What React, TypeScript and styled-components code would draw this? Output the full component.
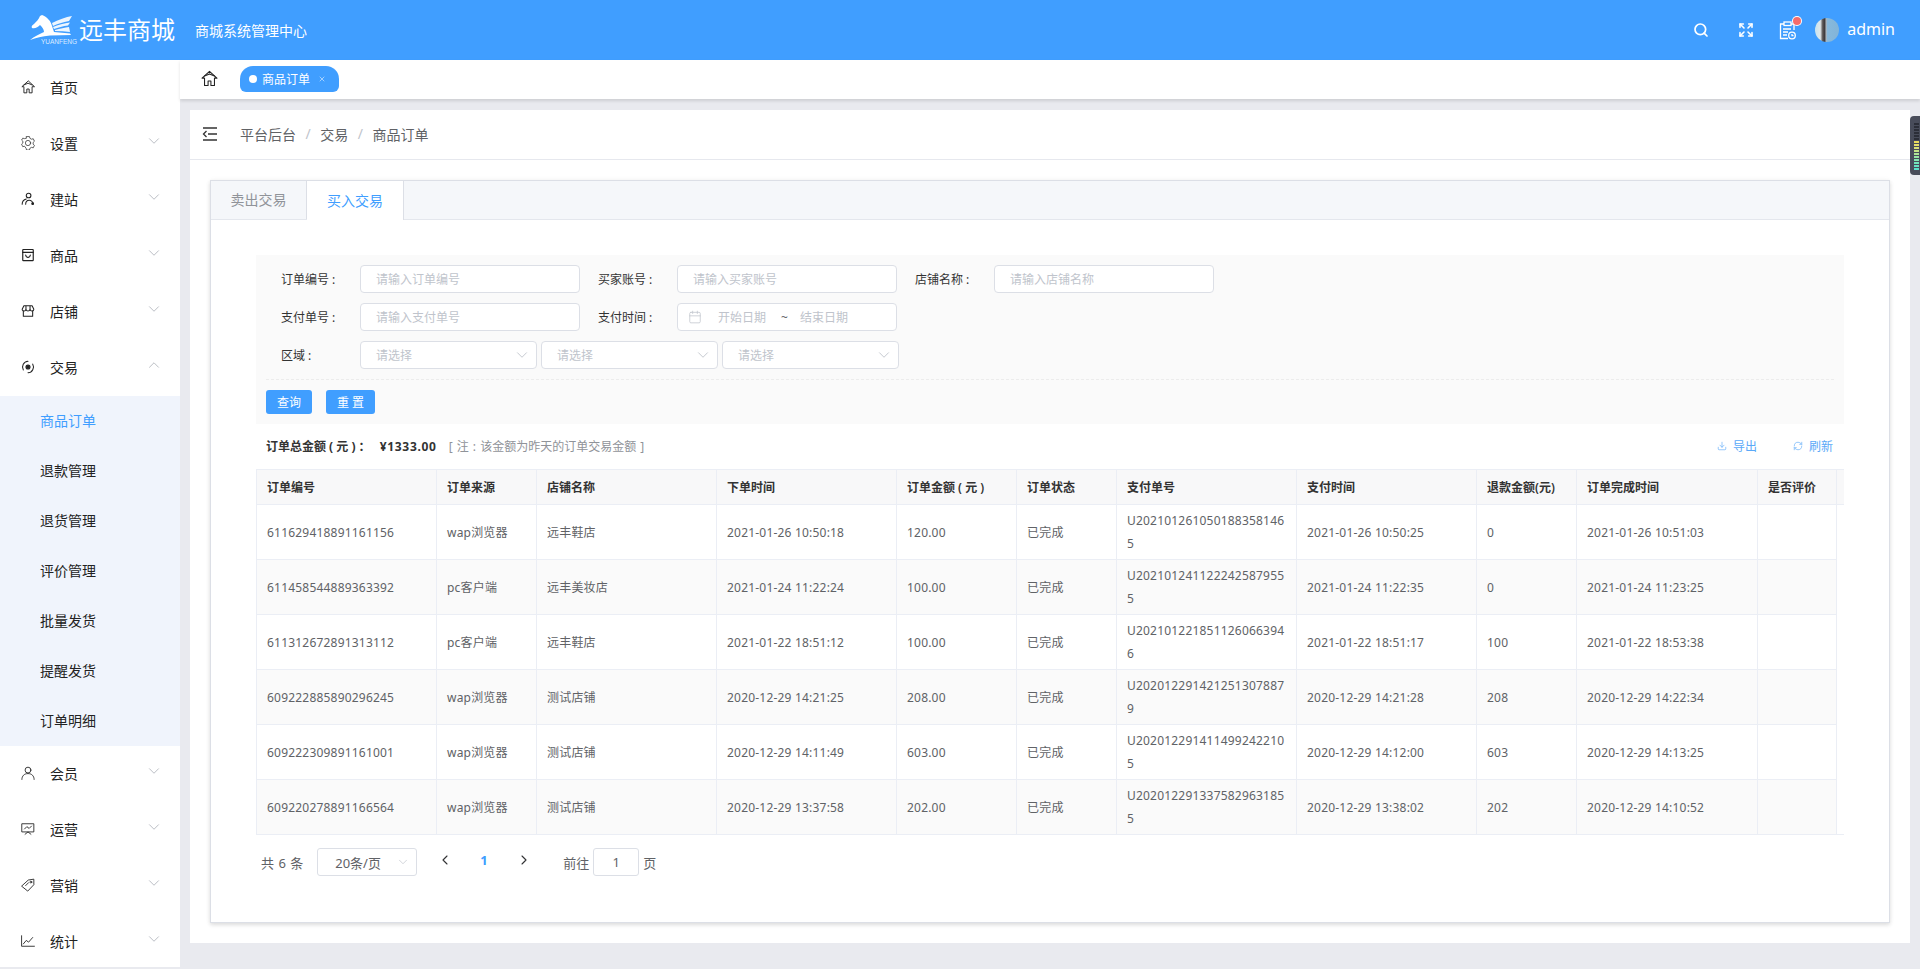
import React from 'react';
import styled, { createGlobalStyle } from 'styled-components';
import {
  ChevronDown,
  ChevronUp,
  ChevronLeft,
  ChevronRight,
  Search,
  Expand,
  Calendar,
  Download,
  RefreshCw,
  X,
} from 'lucide-react';

const GlobalStyle = createGlobalStyle`
  * {
    box-sizing: border-box;
  }

  html,
  body {
    margin: 0;
    height: 100%;
    overflow: hidden;
    background: #e9eaef;
    font-family: 'Noto Sans', 'Noto Sans CJK SC', sans-serif;
    font-size: 12px;
    color: #606266;
  }
`;

const Page = styled.div`
  position: relative;
  height: 969px;
  overflow: hidden;
  display: flex;
  flex-direction: column;
`;

const Header = styled.header`
  height: 60px;
  flex: none;
  background: #409eff;
  color: #fff;
  display: flex;
  align-items: center;
  padding-left: 30px;
  padding-right: 25px;
`;

const Logo = styled.div`
  position: relative;
  width: 48px;
  height: 30px;
  flex: none;
`;

const LogoMark = styled.span`
  position: absolute;
  left: 11px;
  bottom: 0;
  font-size: 6.5px;
  line-height: 7px;
  font-family: 'Liberation Sans', sans-serif;
  color: #dcecff;
  white-space: nowrap;
`;

const Brand = styled.div`
  margin-left: 1px;
  font-size: 24px;
  line-height: 30px;
  width: 116px;
`;

const SubBrand = styled.div`
  font-size: 14px;
  line-height: 20px;
  margin-top: 2px;
`;

const HeaderTools = styled.div`
  margin-left: auto;
  display: flex;
  align-items: center;
`;

const ToolButton = styled.span<{ $gap: number }>`
  display: flex;
  margin-right: ${(p) => p.$gap}px;
`;

const Notify = styled.span`
  position: relative;
  display: flex;
  margin-right: 19px;

  &::after {
    content: '';
    position: absolute;
    top: -4px;
    right: -5px;
    width: 8px;
    height: 8px;
    border-radius: 50%;
    background: #f56c6c;
    box-shadow: 0 0 0 1px #fff;
  }
`;

const Avatar = styled.span`
  width: 24px;
  height: 24px;
  border-radius: 50%;
  margin-right: 8px;
  background: linear-gradient(
    90deg,
    #c5e2f0 0,
    #e0e8ea 22%,
    #5a5655 32%,
    #3f3c3e 40%,
    #a9b5bd 47%,
    #87b9dc 52%,
    #82b4d8 100%
  );
`;

const UserName = styled.span`
  font-size: 16px;
  line-height: 20px;
  margin-top: -2px;
`;

const Body = styled.div`
  flex: 1;
  display: flex;
  min-height: 0;
`;

const Sidebar = styled.aside`
  width: 180px;
  height: 907px;
  flex: none;
  background: #fff;
  overflow: hidden;
`;

const MenuItem = styled.div`
  height: 56px;
  display: flex;
  align-items: center;
  padding-left: 21px;
  padding-bottom: 2px;
  font-size: 14px;
  color: #222;

  > svg:first-child {
    flex: none;
    margin-right: 15px;
    margin-top: -1px;
  }
`;

const MenuArrow = styled.span`
  display: flex;
  margin-left: auto;
  margin-right: 17px;
  margin-top: -5px;
  color: #a4a8b0;
`;

const SubMenu = styled.div`
  background: #f0f4fc;
`;

const SubItem = styled.div<{ $active?: boolean }>`
  height: 50px;
  display: flex;
  align-items: center;
  padding-left: 40px;
  padding-bottom: 2px;
  font-size: 14px;
  color: ${(p) => (p.$active ? '#409eff' : '#222')};
`;

const Main = styled.main`
  flex: 1;
  min-width: 0;
`;

const TagBar = styled.div`
  height: 39px;
  background: #fff;
  display: flex;
  padding-left: 21px;
  padding-top: 6px;
  box-shadow: 0 2px 3px rgba(0, 0, 0, 0.12);
  color: #222;

  > svg {
    margin-top: 4px;
  }
`;

const Tag = styled.div`
  margin-left: 22px;
  width: 99px;
  height: 26px;
  border-radius: 13px 13px 6px 6px;
  background: #409eff;
  color: #fff;
  display: flex;
  align-items: center;
  padding-left: 9px;
  font-size: 12px;
`;

const TagDot = styled.span`
  width: 8px;
  height: 8px;
  border-radius: 50%;
  background: #fff;
  margin-right: 5px;
`;

const TagClose = styled.span`
  display: flex;
  margin-left: 8px;
  color: #d5e8ff;
`;

const Content = styled.section`
  margin: 11px 10px 0;
  background: #fff;
  padding-bottom: 20px;
`;

const Crumbs = styled.div`
  height: 50px;
  border-bottom: 1px solid #e6e8ee;
  display: flex;
  align-items: center;
  padding-left: 12px;
  padding-bottom: 2px;
  font-size: 14px;
  color: #606266;

  > svg {
    margin-right: 22px;
  }
`;

const CrumbSep = styled.span`
  color: #c0c4cc;
  margin: 0 9.5px;
`;

const Card = styled.div`
  margin: 20px 20px 0;
  border: 1px solid #dcdfe6;
  background: #fff;
  box-shadow: 0 2px 4px rgba(0, 0, 0, 0.12), 0 0 6px rgba(0, 0, 0, 0.04);
  padding-bottom: 46px;
`;

const TabHeader = styled.div`
  height: 39px;
  display: flex;
  background: #f5f7fa;
  border-bottom: 1px solid #e4e7ed;
`;

const TabItem = styled.div<{ $active?: boolean }>`
  width: ${(p) => (p.$active ? 97 : 96)}px;
  height: ${(p) => (p.$active ? 39 : 38)}px;
  display: flex;
  align-items: center;
  justify-content: center;
  padding-bottom: 2px;
  font-size: 14px;
  background: ${(p) => (p.$active ? '#fff' : 'transparent')};
  color: ${(p) => (p.$active ? '#409eff' : '#909399')};
  border-right: 1px solid #dcdfe6;
`;

const CardBody = styled.div`
  padding: 35px 45px 0;
`;

const FilterPanel = styled.div`
  background: #fafafa;
  padding: 10px;
  height: 169px;
`;

const FilterRow = styled.div`
  display: flex;
  align-items: center;
  height: 28px;
  margin-bottom: 10px;
  margin-left: -3.5px;
`;

const FieldLabel = styled.label`
  width: 97.5px;
  padding-left: 18.5px;
  flex: none;
  color: #333;
  font-size: 12px;
`;

const TextInput = styled.input`
  width: 219.5px;
  height: 28px;
  flex: none;
  border: 1px solid #dcdfe6;
  border-radius: 4px;
  background: #fff;
  padding: 0 15px;
  font: inherit;
  font-size: 12px;
  outline: none;

  &::placeholder {
    color: #c0c4cc;
  }
`;

const DateBox = styled.div`
  width: 219.5px;
  height: 28px;
  flex: none;
  border: 1px solid #dcdfe6;
  border-radius: 4px;
  background: #fff;
  display: flex;
  align-items: center;
  padding-left: 10px;
  color: #c0c4cc;
`;

const DateText = styled.span<{ $left: number }>`
  margin-left: ${(p) => p.$left}px;
`;

const DateTo = styled.span`
  margin-left: 15px;
  color: #606266;
  margin-right: -3px;
`;

const SelectBox = styled.div`
  width: 177px;
  height: 28px;
  flex: none;
  margin-right: 4px;
  border: 1px solid #dcdfe6;
  border-radius: 4px;
  background: #fff;
  display: flex;
  align-items: center;
  justify-content: space-between;
  padding: 0 5px 0 15px;
  color: #c0c4cc;
`;

const FilterActions = styled.div`
  border-top: 1px dashed #ececec;
  padding-top: 10px;
  display: flex;
  gap: 14px;
`;

const Button = styled.button`
  height: 24px;
  border: 0;
  border-radius: 3px;
  background: #409eff;
  color: #fff;
  font: inherit;
  font-size: 12px;
  padding: 0;
  width: 49px;

  &:first-child {
    width: 46px;
  }
`;

const Summary = styled.div`
  height: 45px;
  display: flex;
  align-items: center;
  padding: 0 11px 2px 10px;
`;

const SummaryTotal = styled.strong`
  color: #333;
  font-weight: 700;
  white-space: pre;
`;

const SummaryAmount = styled.span`
  margin-left: 9px;
  letter-spacing: 0.7px;
`;

const SummaryNote = styled.span`
  margin-left: 12px;
  color: #909399;
  word-spacing: 1px;
`;

const SummaryLink = styled.span<{ $first?: boolean }>`
  display: flex;
  align-items: center;
  gap: 6px;
  color: #5aa9f8;
  margin-left: ${(p) => (p.$first ? 'auto' : '36px')};
`;

const TableWrap = styled.div`
  width: 1588px;
  border-bottom: 1px solid #ebeef5;
`;

const OrderTable = styled.table`
  width: 100%;
  table-layout: fixed;
  border-collapse: separate;
  border-spacing: 0;
  font-size: 12px;

  tbody tr:last-child td {
    height: 54px;
    border-bottom: 0;
  }
`;

const HeadCell = styled.th`
  height: 36px;
  padding: 0 10px;
  text-align: left;
  font-weight: 600;
  color: #333;
  background: #f8f8f9;
  border-top: 1px solid #ebeef5;
  border-bottom: 1px solid #ebeef5;
  border-right: 1px solid #ebeef5;

  &:first-child {
    border-left: 1px solid #ebeef5;
  }
`;

const GutterCell = styled.th`
  background: #f8f8f9;
  border-top: 1px solid #ebeef5;
  border-bottom: 1px solid #ebeef5;
  padding: 0;
`;

const BodyCell = styled.td<{ $stripe: boolean }>`
  height: 55px;
  padding: 0 10px;
  line-height: 23px;
  word-break: break-all;
  letter-spacing: 0.2px;
  color: #606266;
  background: ${(p) => (p.$stripe ? '#fafafa' : '#fff')};
  border-bottom: 1px solid #ebeef5;
  border-right: 1px solid #ebeef5;

  &:first-child {
    border-left: 1px solid #ebeef5;
  }
`;

const Pagination = styled.div`
  display: flex;
  align-items: center;
  height: 28px;
  margin-top: 13px;
  padding-left: 5px;
  font-size: 13px;
  color: #606266;
`;

const PageTotal = styled.span`
  word-spacing: 1px;
`;

const PageSize = styled.div`
  width: 100px;
  height: 28px;
  margin-left: 14px;
  border: 1px solid #dcdfe6;
  border-radius: 3px;
  display: flex;
  align-items: center;
  justify-content: space-between;
  padding: 0 6px 0 17px;
`;

const PageArrow = styled.span<{ $left: number }>`
  display: flex;
  margin-left: ${(p) => p.$left}px;
  margin-top: -4px;
  color: #303133;
`;

const PageCurrent = styled.span`
  margin-left: 27px;
  margin-top: -4px;
  width: 8px;
  color: #409eff;
  font-weight: 700;
`;

const GotoText = styled.span<{ $left: number }>`
  margin-left: ${(p) => p.$left}px;
`;

const GotoInput = styled.div`
  width: 46px;
  height: 28px;
  margin: 0 4px;
  border: 1px solid #dcdfe6;
  border-radius: 3px;
  display: flex;
  align-items: center;
  justify-content: center;
`;

const MeterTab = styled.div`
  position: absolute;
  right: 0;
  top: 116px;
  width: 10px;
  height: 59px;
  border-radius: 4px 0 0 4px;
  background: #484c5a;
`;

const Line = ({ children, size = 14, sw = 1.5 }: { children: React.ReactNode; size?: number; sw?: number }) => (
  <svg width={size} height={size} viewBox='0 0 24 24' fill='none' stroke='currentColor' strokeWidth={sw} strokeLinecap='round' strokeLinejoin='round'>
    {children}
  </svg>
);

const HomeIcon = ({ size = 14, sw = 1.6 }: { size?: number; sw?: number }) => (
  <Line size={size} sw={sw}>
    <path d='M12 2 1.5 11.5H5V22h5v-6.5h4V22h5V11.5h3.500Z' />
    <path d='M5 8.500 12 5.500l7 3' />
  </Line>
);

const GearIcon = () => (
  <Line sw={1.2}>
    <path d='M9.500 2h5l.8 3 2.700 1.500 3-.8 2 4.300-2.200 2 0 3 2.200 2-2 4.300-3-.8-2.700 1.500-.8 3h-5l-.8-3L6 18.500l-3 .8-2-4.300 2.200-2v-3L1 8l2-3.300 3 .8L8.700 5Z' transform='translate(0 -1)' />
    <circle cx='12' cy='12' r='4.500' />
  </Line>
);

const SiteIcon = () => (
  <Line sw={1.8}>
    <circle cx='13' cy='6' r='4' />
    <path d='M2 21c0-5 3-8 7-9' />
    <path d='M8 21c0-4 2-7 6-7s6 3 7 6' />
    <circle cx='20' cy='20' r='1.500' fill='currentColor' />
  </Line>
);

const GoodsIcon = () => (
  <Line sw={2}>
    <rect x='3' y='2.500' width='18' height='19' rx='1' />
    <path d='M3 7.500h18' />
    <path d='M8 12c.5 3 2 4 4 4s3.500-1 4-4' />
  </Line>
);

const StoreIcon = () => (
  <Line sw={1.8}>
    <path d='M5 3h14l3 6c0 2-2 3-3.500 3S16 11 15.500 10c-.5 1-2 2-3.500 2s-3-1-3.500-2C8 11 7 12 5.500 12S2 11 2 9Z' />
    <path d='M4 12v9h16v-9' />
    <path d='M8.500 4v6M15.500 4v6' />
  </Line>
);

const TradeIcon = () => (
  <Line sw={1.8}>
    <path d='M4 17a10 10 0 0 1 8-15M20 7a10 10 0 0 1-8 15' />
    <circle cx='12' cy='12' r='3.500' fill='currentColor' />
  </Line>
);

const UserIcon = () => (
  <Line>
    <circle cx='12' cy='7' r='5' />
    <path d='M1.500 23c0-6 4-10 10.500-10s10.500 4 10.500 10' />
  </Line>
);

const BoardIcon = () => (
  <Line>
    <rect x='2' y='3' width='20' height='14' />
    <path d='m6 12 4-4 4 3 4-4' />
    <path d='M7 21 12 17l5 4' />
  </Line>
);

const TagIcon = () => (
  <Line>
    <path d='m1.500 13.500 11-10 9.500-1.500v9.500l-10 10.500Z' />
    <circle cx='17' cy='7' r='1.500' />
    <path d='m8 13 5-5' />
  </Line>
);

const ChartIcon = () => (
  <Line>
    <path d='M1 3v18h22' />
    <path d='m4 17 5-6 4 3 7-8' />
  </Line>
);

const CollapseIcon = () => (
  <svg width='16' height='14' viewBox='0 0 16 14' fill='none' stroke='#333' strokeWidth='1.3'>
    <path d='M1 1h14M6 7h9M1 13h14' />
    <path d='M4.500 4 1.500 7l3 3' />
  </svg>
);

const ClipboardIcon = () => (
  <svg width='17' height='19' viewBox='0 0 17 19' fill='none' stroke='#fff' strokeWidth='1.300'>
    <path d='M5 3H1.500v14.500H9M12 3h3v6' />
    <rect x='5' y='1' width='7' height='3.500' />
    <path d='M4 8h8M4 11h5M4 14h4' />
    <circle cx='13' cy='14.500' r='3.300' />
    <path d='M13 13v1.700h1.500' />
  </svg>
);

const LogoIcon = () => (
  <svg width='42' height='26' viewBox='0 0 42 26' fill='#fff'>
    <path d='M12 0C17 2 21 6 22 11L24 17 40 18.500 41 20 20 20.500C12 21 6 23 0 25 5 21 10 19 14 17 14 14 12 12 10 10 8 12 5 14 2 13 1 12 2 10 4 9 6 7 9 4 10 1Z' />
    <path opacity='0.9' d='M22 8C28 5 36 2 42 1L39 6C33 7 27 9 23 11Z' />
    <path opacity='0.9' d='M23 12C28 10 34 8 40 7.500L38 10.500C33 11 28 12.500 24 14Z' />
    <path opacity='0.9' d='M25 15C30 13.500 35 12.500 39 12L40 17C35 16.500 30 16 25 16Z' />
  </svg>
);

const Meter = () => {
  const colors = ['#2b2e38', '#2b2e38', '#2b2e38', '#2b2e38', '#2b2e38', '#2b2e38', '#e8dc5c', '#e4e06a', '#d8e276', '#c4e486', '#aee596', '#98e6a4', '#84e6b0', '#72e4ba', '#66e2c2', '#5cdfc8'];
  return (
    <svg width='10' height='59' viewBox='0 0 10 59'>
      {colors.map((c, i) => (
        <rect key={i} x='4' y={7 + i * 3} width='5' height='2' fill={c} />
      ))}
    </svg>
  );
};

const menuBefore = [
  { name: '首页', icon: <HomeIcon />, arrow: false },
  { name: '设置', icon: <GearIcon />, arrow: true },
  { name: '建站', icon: <SiteIcon />, arrow: true },
  { name: '商品', icon: <GoodsIcon />, arrow: true },
  { name: '店铺', icon: <StoreIcon />, arrow: true },
];

const menuAfter = [
  { name: '会员', icon: <UserIcon /> },
  { name: '运营', icon: <BoardIcon /> },
  { name: '营销', icon: <TagIcon /> },
  { name: '统计', icon: <ChartIcon /> },
];

const subMenu = ['商品订单', '退款管理', '退货管理', '评价管理', '批量发货', '提醒发货', '订单明细'];

const columns = [
  { title: '订单编号', width: 181 },
  { title: '订单来源', width: 100 },
  { title: '店铺名称', width: 180 },
  { title: '下单时间', width: 180 },
  { title: '订单金额 ( 元 )', width: 120 },
  { title: '订单状态', width: 100 },
  { title: '支付单号', width: 180 },
  { title: '支付时间', width: 180 },
  { title: '退款金额(元)', width: 100 },
  { title: '订单完成时间', width: 181 },
  { title: '是否评价', width: 79 },
];

const orders = [
  ['611629418891161156', 'wap浏览器', '远丰鞋店', '2021-01-26 10:50:18', '120.00', '已完成', 'U2021012610501883581465', '2021-01-26 10:50:25', '0', '2021-01-26 10:51:03', ''],
  ['611458544889363392', 'pc客户端', '远丰美妆店', '2021-01-24 11:22:24', '100.00', '已完成', 'U2021012411222425879555', '2021-01-24 11:22:35', '0', '2021-01-24 11:23:25', ''],
  ['611312672891313112', 'pc客户端', '远丰鞋店', '2021-01-22 18:51:12', '100.00', '已完成', 'U2021012218511260663946', '2021-01-22 18:51:17', '100', '2021-01-22 18:53:38', ''],
  ['609222885890296245', 'wap浏览器', '测试店铺', '2020-12-29 14:21:25', '208.00', '已完成', 'U2020122914212513078879', '2020-12-29 14:21:28', '208', '2020-12-29 14:22:34', ''],
  ['609222309891161001', 'wap浏览器', '测试店铺', '2020-12-29 14:11:49', '603.00', '已完成', 'U2020122914114992422105', '2020-12-29 14:12:00', '603', '2020-12-29 14:13:25', ''],
  ['609220278891166564', 'wap浏览器', '测试店铺', '2020-12-29 13:37:58', '202.00', '已完成', 'U2020122913375829631855', '2020-12-29 13:38:02', '202', '2020-12-29 14:10:52', ''],
];

export default function App() {
  return (
    <Page>
      <GlobalStyle />
      <Header>
        <Logo>
          <LogoIcon />
          <LogoMark>YUANFENG</LogoMark>
        </Logo>
        <Brand>远丰商城</Brand>
        <SubBrand>商城系统管理中心</SubBrand>
        <HeaderTools>
          <ToolButton $gap={29}>
            <Search size={16} strokeWidth={2.6} />
          </ToolButton>
          <ToolButton $gap={25}>
            <Expand size={16} strokeWidth={2.4} />
          </ToolButton>
          <Notify>
            <ClipboardIcon />
          </Notify>
          <Avatar />
          <UserName>admin</UserName>
        </HeaderTools>
      </Header>
      <Body>
        <Sidebar>
          {menuBefore.map((m) => (
            <MenuItem key={m.name}>
              {m.icon}
              {m.name}
              {m.arrow && (
                <MenuArrow>
                  <ChevronDown size={18} strokeWidth={1} />
                </MenuArrow>
              )}
            </MenuItem>
          ))}
          <MenuItem>
            <TradeIcon />
            交易
            <MenuArrow>
              <ChevronUp size={18} strokeWidth={1} />
            </MenuArrow>
          </MenuItem>
          <SubMenu>
            {subMenu.map((name, i) => (
              <SubItem key={name} $active={i === 0}>
                {name}
              </SubItem>
            ))}
          </SubMenu>
          {menuAfter.map((m) => (
            <MenuItem key={m.name}>
              {m.icon}
              {m.name}
              <MenuArrow>
                <ChevronDown size={18} strokeWidth={1} />
              </MenuArrow>
            </MenuItem>
          ))}
        </Sidebar>
        <Main>
          <TagBar>
            <HomeIcon size={17} sw={1.5} />
            <Tag>
              <TagDot />
              商品订单
              <TagClose>
                <X size={8} strokeWidth={2} />
              </TagClose>
            </Tag>
          </TagBar>
          <Content>
            <Crumbs>
              <CollapseIcon />
              平台后台
              <CrumbSep>/</CrumbSep>
              交易
              <CrumbSep>/</CrumbSep>
              商品订单
            </Crumbs>
            <Card>
              <TabHeader>
                <TabItem>卖出交易</TabItem>
                <TabItem $active>买入交易</TabItem>
              </TabHeader>
              <CardBody>
                <FilterPanel>
                  <FilterRow>
                    <FieldLabel>订单编号 :</FieldLabel>
                    <TextInput placeholder='请输入订单编号' />
                    <FieldLabel>买家账号 :</FieldLabel>
                    <TextInput placeholder='请输入买家账号' />
                    <FieldLabel>店铺名称 :</FieldLabel>
                    <TextInput placeholder='请输入店铺名称' />
                  </FilterRow>
                  <FilterRow>
                    <FieldLabel>支付单号 :</FieldLabel>
                    <TextInput placeholder='请输入支付单号' />
                    <FieldLabel>支付时间 :</FieldLabel>
                    <DateBox>
                      <Calendar size={14} strokeWidth={1.3} />
                      <DateText $left={16}>开始日期</DateText>
                      <DateTo>~</DateTo>
                      <DateText $left={15}>结束日期</DateText>
                    </DateBox>
                  </FilterRow>
                  <FilterRow>
                    <FieldLabel>区域 :</FieldLabel>
                    {[0, 1, 2].map((i) => (
                      <SelectBox key={i}>
                        请选择
                        <ChevronDown size={18} strokeWidth={1.2} />
                      </SelectBox>
                    ))}
                  </FilterRow>
                  <FilterActions>
                    <Button>查询</Button>
                    <Button>重 置</Button>
                  </FilterActions>
                </FilterPanel>
                <Summary>
                  <SummaryTotal>
                    订单总金额 ( 元 ) ：<SummaryAmount>¥1333.00</SummaryAmount>
                  </SummaryTotal>
                  <SummaryNote>[ 注 : 该金额为昨天的订单交易金额 ]</SummaryNote>
                  <SummaryLink $first>
                    <Download size={10} strokeWidth={1.5} />
                    导出
                  </SummaryLink>
                  <SummaryLink>
                    <RefreshCw size={10} strokeWidth={1.5} />
                    刷新
                  </SummaryLink>
                </Summary>
                <TableWrap>
                  <OrderTable>
                    <colgroup>
                      {columns.map((c) => (
                        <col key={c.title} width={c.width} />
                      ))}
                      <col width={7} />
                    </colgroup>
                    <thead>
                      <tr>
                        {columns.map((c) => (
                          <HeadCell key={c.title}>{c.title}</HeadCell>
                        ))}
                        <GutterCell />
                      </tr>
                    </thead>
                    <tbody>
                      {orders.map((row, r) => (
                        <tr key={row[0]}>
                          {row.map((v, c) => (
                            <BodyCell key={c} $stripe={r % 2 === 1}>
                              {v}
                            </BodyCell>
                          ))}
                        </tr>
                      ))}
                    </tbody>
                  </OrderTable>
                </TableWrap>
                <Pagination>
                  <PageTotal>共 6 条</PageTotal>
                  <PageSize>
                    20条/页
                    <ChevronDown size={14} strokeWidth={1.2} color='#c0c4cc' />
                  </PageSize>
                  <PageArrow $left={20}>
                    <ChevronLeft size={16} strokeWidth={1.6} />
                  </PageArrow>
                  <PageCurrent>1</PageCurrent>
                  <PageArrow $left={28}>
                    <ChevronRight size={16} strokeWidth={1.6} />
                  </PageArrow>
                  <GotoText $left={31}>前往</GotoText>
                  <GotoInput>1</GotoInput>
                  页
                </Pagination>
              </CardBody>
            </Card>
          </Content>
        </Main>
      </Body>
      <MeterTab>
        <Meter />
      </MeterTab>
    </Page>
  );
}
